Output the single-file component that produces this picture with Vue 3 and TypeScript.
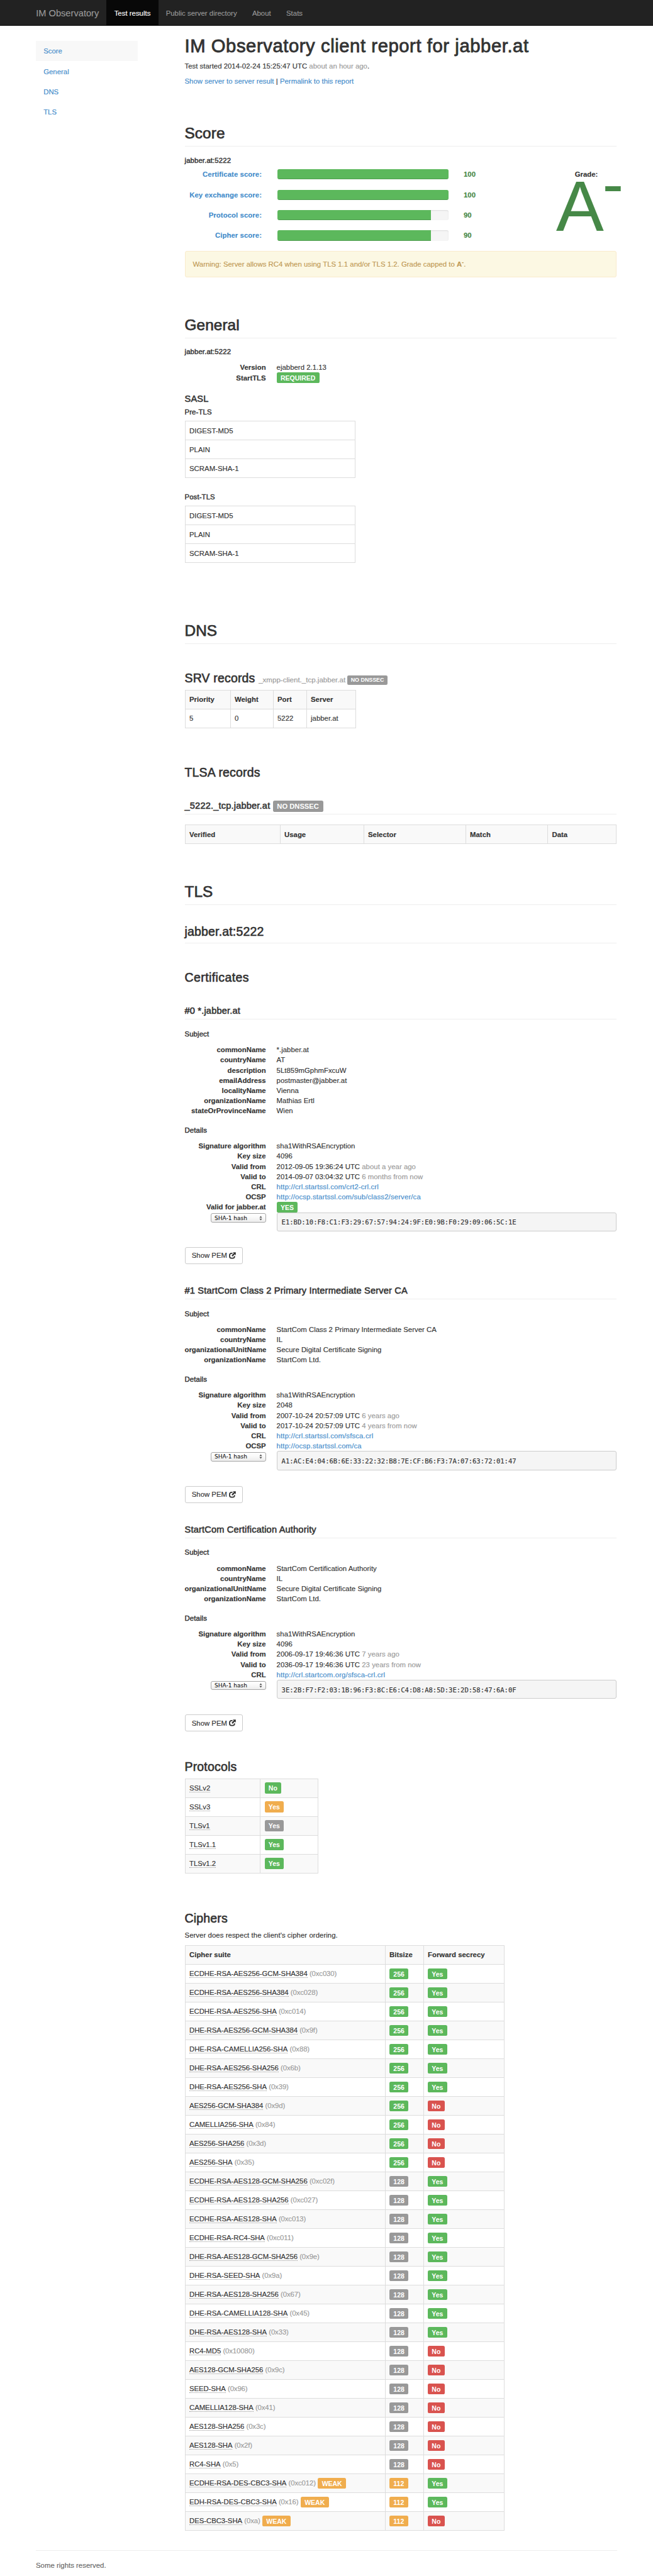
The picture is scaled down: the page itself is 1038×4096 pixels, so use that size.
<script setup lang="ts">
type Tone = 'success' | 'warning' | 'danger' | 'muted'

interface Pair { key: string; value: string; note?: string; link?: boolean; badge?: boolean }
interface Cert { title: string; subject: Pair[]; details: Pair[]; hash: string }
interface Cipher { name: string; id: string; bits: number; fs: boolean }

const nav = ['Test results', 'Public server directory', 'About', 'Stats']
const sections = ['Score', 'General', 'DNS', 'TLS']

const scores = [
  { label: 'Certificate score:', value: 100 },
  { label: 'Key exchange score:', value: 100 },
  { label: 'Protocol score:', value: 90 },
  { label: 'Cipher score:', value: 90 },
]

const sasl = [
  { label: 'Pre-TLS', mechanisms: ['DIGEST-MD5', 'PLAIN', 'SCRAM-SHA-1'] },
  { label: 'Post-TLS', mechanisms: ['DIGEST-MD5', 'PLAIN', 'SCRAM-SHA-1'] },
]

const certs: Cert[] = [
  {
    title: '#0 *.jabber.at',
    subject: [
      { key: 'commonName', value: '*.jabber.at' },
      { key: 'countryName', value: 'AT' },
      { key: 'description', value: '5Lt859mGphmFxcuW' },
      { key: 'emailAddress', value: 'postmaster@jabber.at' },
      { key: 'localityName', value: 'Vienna' },
      { key: 'organizationName', value: 'Mathias Ertl' },
      { key: 'stateOrProvinceName', value: 'Wien' },
    ],
    details: [
      { key: 'Signature algorithm', value: 'sha1WithRSAEncryption' },
      { key: 'Key size', value: '4096' },
      { key: 'Valid from', value: '2012-09-05 19:36:24 UTC', note: 'about a year ago' },
      { key: 'Valid to', value: '2014-09-07 03:04:32 UTC', note: '6 months from now' },
      { key: 'CRL', value: 'http://crl.startssl.com/crt2-crl.crl', link: true },
      { key: 'OCSP', value: 'http://ocsp.startssl.com/sub/class2/server/ca', link: true },
      { key: 'Valid for jabber.at', value: 'YES', badge: true },
    ],
    hash: 'E1:BD:10:F8:C1:F3:29:67:57:94:24:9F:E0:9B:F0:29:09:06:5C:1E',
  },
  {
    title: '#1 StartCom Class 2 Primary Intermediate Server CA',
    subject: [
      { key: 'commonName', value: 'StartCom Class 2 Primary Intermediate Server CA' },
      { key: 'countryName', value: 'IL' },
      { key: 'organizationalUnitName', value: 'Secure Digital Certificate Signing' },
      { key: 'organizationName', value: 'StartCom Ltd.' },
    ],
    details: [
      { key: 'Signature algorithm', value: 'sha1WithRSAEncryption' },
      { key: 'Key size', value: '2048' },
      { key: 'Valid from', value: '2007-10-24 20:57:09 UTC', note: '6 years ago' },
      { key: 'Valid to', value: '2017-10-24 20:57:09 UTC', note: '4 years from now' },
      { key: 'CRL', value: 'http://crl.startssl.com/sfsca.crl', link: true },
      { key: 'OCSP', value: 'http://ocsp.startssl.com/ca', link: true },
    ],
    hash: 'A1:AC:E4:04:6B:6E:33:22:32:B8:7E:CF:B6:F3:7A:07:63:72:01:47',
  },
  {
    title: 'StartCom Certification Authority',
    subject: [
      { key: 'commonName', value: 'StartCom Certification Authority' },
      { key: 'countryName', value: 'IL' },
      { key: 'organizationalUnitName', value: 'Secure Digital Certificate Signing' },
      { key: 'organizationName', value: 'StartCom Ltd.' },
    ],
    details: [
      { key: 'Signature algorithm', value: 'sha1WithRSAEncryption' },
      { key: 'Key size', value: '4096' },
      { key: 'Valid from', value: '2006-09-17 19:46:36 UTC', note: '7 years ago' },
      { key: 'Valid to', value: '2036-09-17 19:46:36 UTC', note: '23 years from now' },
      { key: 'CRL', value: 'http://crl.startcom.org/sfsca-crl.crl', link: true },
    ],
    hash: '3E:2B:F7:F2:03:1B:96:F3:8C:E6:C4:D8:A8:5D:3E:2D:58:47:6A:0F',
  },
]

const protocols: { name: string; enabled: string; tone: Tone }[] = [
  { name: 'SSLv2', enabled: 'No', tone: 'success' },
  { name: 'SSLv3', enabled: 'Yes', tone: 'warning' },
  { name: 'TLSv1', enabled: 'Yes', tone: 'muted' },
  { name: 'TLSv1.1', enabled: 'Yes', tone: 'success' },
  { name: 'TLSv1.2', enabled: 'Yes', tone: 'success' },
]

const suite = (name: string, id: string, bits: number, fs: boolean): Cipher => ({ name, id, bits, fs })
const ciphers: Cipher[] = [
  suite('ECDHE-RSA-AES256-GCM-SHA384', '0xc030', 256, true),
  suite('ECDHE-RSA-AES256-SHA384', '0xc028', 256, true),
  suite('ECDHE-RSA-AES256-SHA', '0xc014', 256, true),
  suite('DHE-RSA-AES256-GCM-SHA384', '0x9f', 256, true),
  suite('DHE-RSA-CAMELLIA256-SHA', '0x88', 256, true),
  suite('DHE-RSA-AES256-SHA256', '0x6b', 256, true),
  suite('DHE-RSA-AES256-SHA', '0x39', 256, true),
  suite('AES256-GCM-SHA384', '0x9d', 256, false),
  suite('CAMELLIA256-SHA', '0x84', 256, false),
  suite('AES256-SHA256', '0x3d', 256, false),
  suite('AES256-SHA', '0x35', 256, false),
  suite('ECDHE-RSA-AES128-GCM-SHA256', '0xc02f', 128, true),
  suite('ECDHE-RSA-AES128-SHA256', '0xc027', 128, true),
  suite('ECDHE-RSA-AES128-SHA', '0xc013', 128, true),
  suite('ECDHE-RSA-RC4-SHA', '0xc011', 128, true),
  suite('DHE-RSA-AES128-GCM-SHA256', '0x9e', 128, true),
  suite('DHE-RSA-SEED-SHA', '0x9a', 128, true),
  suite('DHE-RSA-AES128-SHA256', '0x67', 128, true),
  suite('DHE-RSA-CAMELLIA128-SHA', '0x45', 128, true),
  suite('DHE-RSA-AES128-SHA', '0x33', 128, true),
  suite('RC4-MD5', '0x10080', 128, false),
  suite('AES128-GCM-SHA256', '0x9c', 128, false),
  suite('SEED-SHA', '0x96', 128, false),
  suite('CAMELLIA128-SHA', '0x41', 128, false),
  suite('AES128-SHA256', '0x3c', 128, false),
  suite('AES128-SHA', '0x2f', 128, false),
  suite('RC4-SHA', '0x5', 128, false),
  suite('ECDHE-RSA-DES-CBC3-SHA', '0xc012', 112, true),
  suite('EDH-RSA-DES-CBC3-SHA', '0x16', 112, true),
  suite('DES-CBC3-SHA', '0xa', 112, false),
]

const bitTone = (bits: number): Tone => (bits >= 256 ? 'success' : bits >= 128 ? 'muted' : 'warning')
</script>

<template>
  <div class="page">
    <header class="navbar">
      <a class="brand">IM Observatory</a>
      <a v-for="(item, i) in nav" :key="item" class="nav-item" :class="{ active: i === 0 }">{{ item }}</a>
    </header>

    <div class="body">
      <aside class="sidebar">
        <a v-for="(s, i) in sections" :key="s" class="side-item" :class="{ active: i === 0 }">{{ s }}</a>
      </aside>

      <main class="content">
        <h1>IM Observatory client report for jabber.at</h1>
        <p>Test started 2014-02-24 15:25:47 UTC <span class="note">about an hour ago</span>.</p>
        <p><a>Show server to server result</a> | <a>Permalink to this report</a></p>

        <h2 class="after-intro">Score</h2>
        <h5 class="score-host">jabber.at:5222</h5>
        <div class="score">
          <div class="bars">
            <div v-for="s in scores" :key="s.label" class="bar-row">
              <a class="bar-label">{{ s.label }}</a>
              <div class="track"><div class="fill" :style="{ width: s.value + '%' }"></div></div>
              <b class="bar-value">{{ s.value }}</b>
            </div>
          </div>
          <div class="grade">
            <b class="grade-label">Grade:</b>
            <div class="grade-value">A<span class="grade-mod">-</span></div>
          </div>
        </div>
        <div class="alert">Warning: Server allows RC4 when using TLS 1.1 and/or TLS 1.2. Grade capped to <b>A<sup>-</sup></b>.</div>

        <h2 class="after-alert">General</h2>
        <h5 class="general-host">jabber.at:5222</h5>
        <dl>
          <dt>Version</dt><dd>ejabberd 2.1.13</dd>
          <dt>StartTLS</dt><dd><span class="label success">REQUIRED</span></dd>
        </dl>
        <h4 class="sasl-title">SASL</h4>
        <template v-for="group in sasl" :key="group.label">
          <h5 class="sasl-group">{{ group.label }}</h5>
          <table class="sasl-table">
            <tbody>
              <tr v-for="m in group.mechanisms" :key="m"><td>{{ m }}</td></tr>
            </tbody>
          </table>
        </template>

        <h2 class="dns-title">DNS</h2>
        <h3 class="srv-title">SRV records <small>_xmpp-client._tcp.jabber.at <span class="label muted">NO DNSSEC</span></small></h3>
        <table class="srv-table">
          <colgroup><col class="w72"><col class="w68"><col class="w53"><col></colgroup>
          <tbody>
            <tr class="shade"><th>Priority</th><th>Weight</th><th>Port</th><th>Server</th></tr>
            <tr><td>5</td><td>0</td><td>5222</td><td>jabber.at</td></tr>
          </tbody>
        </table>

        <h3 class="tlsa-title">TLSA records</h3>
        <h4 class="tlsa-host ruled">_5222._tcp.jabber.at <span class="label muted">NO DNSSEC</span></h4>
        <table class="tlsa-table">
          <colgroup><col class="w151"><col class="w133"><col class="w162"><col class="w131"><col></colgroup>
          <tbody>
            <tr class="shade"><th>Verified</th><th>Usage</th><th>Selector</th><th>Match</th><th>Data</th></tr>
          </tbody>
        </table>

        <h2 class="tls-title">TLS</h2>
        <h3 class="tls-host ruled">jabber.at:5222</h3>

        <h3 class="certs-title">Certificates</h3>
        <section v-for="cert in certs" :key="cert.title" class="cert">
          <h4 class="ruled">{{ cert.title }}</h4>
          <h5 class="subject">Subject</h5>
          <dl>
            <template v-for="p in cert.subject" :key="p.key"><dt>{{ p.key }}</dt><dd>{{ p.value }}</dd></template>
          </dl>
          <h5 class="details">Details</h5>
          <dl>
            <template v-for="p in cert.details" :key="p.key">
              <dt>{{ p.key }}</dt>
              <dd>
                <a v-if="p.link" class="url">{{ p.value }}</a>
                <span v-else-if="p.badge" class="label success">{{ p.value }}</span>
                <template v-else>{{ p.value }}</template>
                <span v-if="p.note" class="note">&nbsp;{{ p.note }}</span>
              </dd>
            </template>
            <dt class="hash-key">
              <span class="select">SHA-1 hash
                <svg width="5" height="8" viewBox="0 0 5 8"><path d="M2.5 0.4 4.6 3.2H0.4zM2.5 7.6 0.4 4.8H4.6z" fill="#555" /></svg>
              </span>
            </dt>
            <dd class="hash"><pre>{{ cert.hash }}</pre></dd>
          </dl>
          <button class="pem">Show PEM
            <svg width="11" height="11" viewBox="0 0 11 11">
              <path d="M5.6 1.9H3.9A2.9 2.9 0 0 0 1 4.8v2A2.9 2.9 0 0 0 3.9 9.7h2A2.9 2.9 0 0 0 8.8 6.8V6.2" fill="none" stroke="#333" stroke-width="1.8" />
              <path d="M6 0.2H10.8V5L9.2 3.4 5.7 6.9 4.1 5.3 7.6 1.8z" fill="#333" />
            </svg>
          </button>
        </section>

        <h3 class="protocols-title">Protocols</h3>
        <table class="protocols">
          <colgroup><col class="w119"><col></colgroup>
          <tbody>
            <tr v-for="(p, i) in protocols" :key="p.name" :class="{ shade: i % 2 === 0 }">
              <td><abbr>{{ p.name }}</abbr></td>
              <td><span class="label" :class="p.tone">{{ p.enabled }}</span></td>
            </tr>
          </tbody>
        </table>

        <h3 class="ciphers-title">Ciphers</h3>
        <p class="cipher-note">Server does respect the client's cipher ordering.</p>
        <table class="ciphers">
          <colgroup><col class="w318"><col class="w61"><col></colgroup>
          <tbody>
            <tr class="shade"><th>Cipher suite</th><th>Bitsize</th><th>Forward secrecy</th></tr>
            <tr v-for="(c, i) in ciphers" :key="c.name" :class="{ shade: i % 2 === 1 }">
              <td><abbr>{{ c.name }}</abbr> <span class="note id">({{ c.id }})</span><span v-if="c.bits < 128" class="label warning weak">WEAK</span></td>
              <td><span class="label" :class="bitTone(c.bits)">{{ c.bits }}</span></td>
              <td><span class="label" :class="c.fs ? 'success' : 'danger'">{{ c.fs ? 'Yes' : 'No' }}</span></td>
            </tr>
          </tbody>
        </table>
      </main>
    </div>

    <footer>Some rights reserved.</footer>
  </div>
</template>

<style>
html, body { margin: 0; background: #fff; }
</style>

<style scoped>
.page {
  box-sizing: border-box;
  width: 1038px;
  height: 4096px;
  overflow: hidden;
  font: 11.35px/16px "Liberation Sans", Arial, sans-serif;
  letter-spacing: 0.03px;
  color: #333;
  -webkit-text-stroke-width: 0.15px;
}
h1, h2, h3, h4, h5 { margin: 0; font-weight: 400; -webkit-text-stroke: 0.55px #333; white-space: nowrap; }
h1 { font-size: 29.2px; line-height: 32px; letter-spacing: 0.59px; -webkit-text-stroke-width: 0.85px; }
h2 { font-size: 24.33px; line-height: 27px; letter-spacing: 0.1px; padding-bottom: 7px; border-bottom: 1px solid #eee; -webkit-text-stroke-width: 0.75px; }
h3 { font-size: 19.46px; line-height: 21px; letter-spacing: 0.2px; -webkit-text-stroke-width: 0.65px; }
h4 { font-size: 14.6px; line-height: 16px; letter-spacing: 0.18px; }
h5 { font-size: 11.35px; line-height: 12px; letter-spacing: 0.12px; -webkit-text-stroke-width: 0.42px; }
p { margin: 0 0 8px; }
a { color: #428bca; text-decoration: none; }
.note { color: #999; }

.navbar {
  box-sizing: border-box;
  display: flex;
  height: 41px;
  padding-left: 45px;
  background: #222;
  border-bottom: 1px solid #080808;
}
.navbar a { padding: 12.6px 12.16px 0; color: #999; white-space: nowrap; }
.navbar .brand { font-size: 14.6px; padding-top: 13px; }
.navbar .active { background: #080808; color: #fff; }

.body { display: flex; padding-left: 57px; }
.sidebar { width: 162px; padding-top: 24px; margin-right: 74.5px; flex: none; }
.side-item { display: block; box-sizing: border-box; height: 32.43px; padding: 8.1px 12.16px; }
.side-item.active { background: #f8f8f8; }
.content { width: 686.5px; flex: none; padding-top: 16.3px; }
h1 { margin-bottom: 7.9px; }

.after-intro { margin-top: 61px; }
.score-host { margin-top: 16px; }
.score { display: flex; justify-content: space-between; margin-top: 8px; height: 130px; }
.bar-row { display: flex; height: 16.2px; margin-bottom: 16.23px; }
.bar-label { width: 122.5px; margin-right: 25px; text-align: right; font-weight: bold; letter-spacing: 0.07px; white-space: nowrap; }
.track { width: 271.5px; border-radius: 3px; overflow: hidden; background: #f5f5f5; box-shadow: inset 0 1px 2px rgba(0, 0, 0, 0.1); }
.fill { height: 100%; background: #5cb85c; box-shadow: inset 0 -1px 0 rgba(0, 0, 0, 0.15); }
.bar-value { margin-left: 24.5px; color: #468847; }
.grade { width: 96px; }
.grade-label { display: block; text-align: center; }
.grade-value { display: flex; font-size: 113.5px; line-height: 86px; letter-spacing: 0; color: #468847; white-space: nowrap; }
.grade-mod { font-size: 100px; line-height: 15.6px; margin-left: -2px; }
.alert {
  box-sizing: border-box;
  height: 42px;
  padding: 12px 12px 0;
  color: #c09853;
  background: #fcf8e3;
  border: 1px solid #faebcc;
  border-radius: 3px;
}
.alert sup { font-size: 75%; line-height: 0; vertical-align: baseline; position: relative; top: -0.5em; }

.after-alert { margin-top: 61.5px; }
.general-host { margin-top: 15.6px; margin-bottom: 11px; }
dl { margin: 0; display: grid; grid-template-columns: 129.1px 540.4px; column-gap: 17px; line-height: 16.22px; }
dt { text-align: right; font-weight: bold; letter-spacing: 0; white-space: nowrap; }
dd { margin: 0; height: 16.22px; white-space: nowrap; }
.url { letter-spacing: 0.15px; }

.label {
  font-size: 10.5px;
  line-height: 1;
  font-weight: bold;
  letter-spacing: 0;
  color: #fff;
  padding: 0.25em 0.6em;
  border-radius: 0.25em;
  -webkit-text-stroke-width: 0;
}
.success { background: #5cb85c; }
.warning { background: #f0ad4e; }
.danger { background: #d9534f; }
.muted { background: #999; }
.weak { margin-left: 3.4px; }

.sasl-title { margin: 17.3px 0 7.2px; }
.sasl-group { margin-bottom: 8px; }
.sasl-table { width: 271.5px; margin-bottom: 24px; }

table {
  border-collapse: separate;
  border-spacing: 0;
  table-layout: fixed;
  border-top: 1px solid #ddd;
  border-left: 1px solid #ddd;
}
td, th {
  box-sizing: border-box;
  height: 30px;
  padding: 6px 6.5px 6px;
  border-right: 1px solid #ddd;
  border-bottom: 1px solid #ddd;
  text-align: left;
  vertical-align: middle;
  white-space: nowrap;
  overflow: hidden;
}
.shade { background: #f9f9f9; }
abbr { border-bottom: 1px dotted #999; letter-spacing: -0.03px; }
.id { letter-spacing: -0.1px; }

.dns-title { margin-top: 93.3px; }
.srv-title { margin-top: 44.2px; margin-bottom: 8.2px; }
.srv-title small { font-size: 11.55px; letter-spacing: 0; line-height: 1; color: #999; -webkit-text-stroke: 0.15px #999; }
.srv-title .label { font-size: 8.9px; -webkit-text-stroke-width: 0; }
.srv-table { width: 272px; }
.w72 { width: 72px; }
.w68 { width: 68px; }
.w53 { width: 53px; }

.tlsa-title { margin-top: 60.5px; }
.tlsa-host { margin-top: 33.5px; }
.tlsa-host .label { font-size: 11.2px; }
.ruled { padding-bottom: 5px; border-bottom: 1px solid #eee; }
.tlsa-table { width: 686.5px; margin-top: 16.5px; }
.w151 { width: 151px; }
.w133 { width: 133px; }
.w162 { width: 162px; }
.w131 { width: 130.5px; }

.tls-title { margin-top: 61.5px; }
.tls-host { margin-top: 31.8px; padding-bottom: 7.5px; }
.certs-title { margin-top: 44.3px; margin-bottom: 33.5px; letter-spacing: 0.44px; }

.cert h4 { margin-bottom: 16.8px; }
.subject, .details { margin-bottom: 11.3px; }
.details { margin-top: 16.2px; }
.hash-key { height: 30.3px; }
.select {
  display: inline-flex;
  box-sizing: border-box;
  align-items: center;
  justify-content: space-between;
  width: 87.6px;
  height: 14.8px;
  margin-top: 1.5px;
  padding: 0 5px 0 5px;
  vertical-align: top;
  font: 9px/12px "DejaVu Sans", sans-serif;
  color: #000;
  -webkit-text-stroke-width: 0;
  border: 1px solid #a6a6a6;
  border-radius: 3px;
  background: linear-gradient(#fff, #f9f9f9 45%, #ececec);
}
.hash { height: 30.3px; }
.hash pre {
  box-sizing: border-box;
  height: 30.3px;
  margin: 0;
  padding: 6.5px 7px;
  font: 10.5px/16px "DejaVu Sans Mono", monospace;
  letter-spacing: 0;
  color: #333;
  background: #f5f5f5;
  border: 1px solid #ccc;
  border-radius: 3px;
}
.pem {
  display: flex;
  align-items: center;
  gap: 3.5px;
  box-sizing: border-box;
  width: 92.2px;
  height: 27px;
  margin: 25px 0 33.8px;
  padding: 0 0 0 10.3px;
  font: inherit;
  color: #333;
  background: #fff;
  border: 1px solid #ccc;
  border-radius: 3px;
  white-space: nowrap;
}

.protocols-title { margin-top: 45.2px; margin-bottom: 8px; }
.protocols { width: 212.5px; }
.w119 { width: 119.5px; }
.ciphers-title { margin-top: 61.3px; margin-bottom: 7.8px; }
.cipher-note { letter-spacing: 0.07px; margin-bottom: 8px; }
.ciphers { width: 508.5px; }
.w318 { width: 318px; }
.w61 { width: 61px; }

footer { width: 923.5px; margin: 31px 0 0 57px; padding-top: 15.7px; border-top: 1px solid #eee; color: #666; }
</style>
